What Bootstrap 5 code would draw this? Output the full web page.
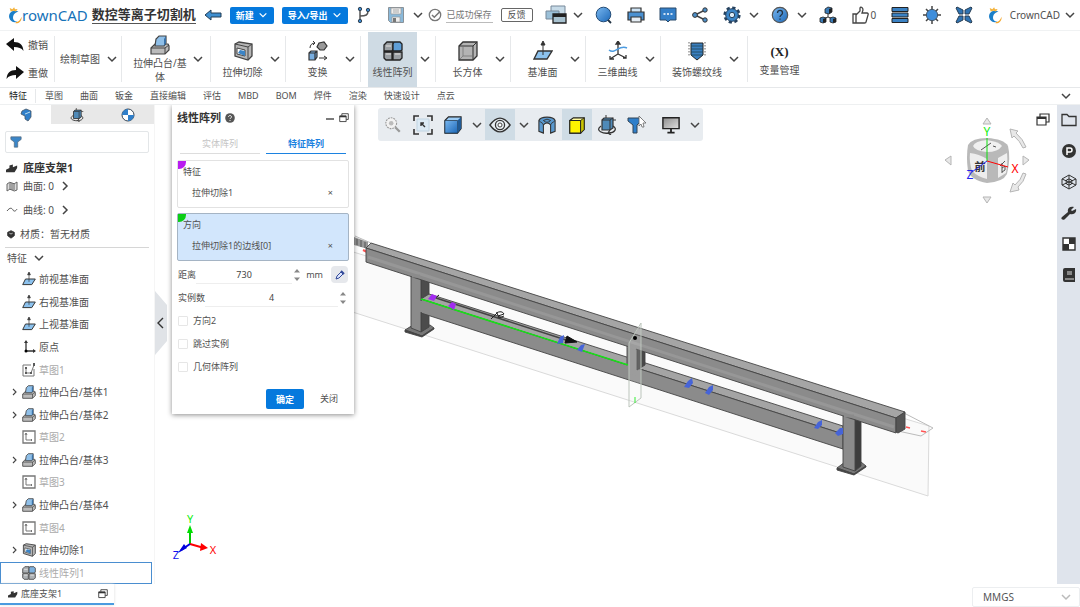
<!DOCTYPE html>
<html lang="zh-CN">
<head>
<meta charset="utf-8">
<meta name="viewport" content="width=device-width, initial-scale=1">
<title>CrownCAD</title>
<link rel="stylesheet" href="https://cdn.jsdelivr.net/npm/bootstrap@5.3.0/dist/css/bootstrap.min.css">
<style>
:root{--ink:#505050;--line:#e6e8ea;--brand:#0579dd;--hl:#cfdbe4}
body{font-family:"Noto Sans","Noto Sans CJK SC",sans-serif;font-size:10px;line-height:14px;color:var(--ink);background:#fff;height:100vh;overflow:hidden}
button{border:0;background:none;padding:0;color:inherit;font:inherit}
a{color:inherit;text-decoration:none}
svg{display:block;flex:none}
main{min-height:0}
.i10{width:10px;height:10px}.i12{width:12px;height:12px}.i14{width:14px;height:14px}.i18{width:18px;height:18px}.i20{width:20px;height:20px}
.chev{width:12px;height:12px;fill:none;stroke:#444;stroke-width:1.5}
.center{display:flex;align-items:center;justify-content:center}
.topbar{height:31px;border-bottom:1px solid #f0f2f3}
.logo-word{font-size:15px;line-height:20px;color:#1672b8}
.doc-title{font-size:13px;line-height:17px;font-weight:700;color:#333;border-bottom:1px solid #555}
.btn-brand{background:var(--brand);color:#fff;font-size:9px;line-height:13px;font-weight:700;border-radius:2px;padding:2px 6px}
.btn-brand:hover{background:#0468bf;color:#fff}
.btn-brand .chev{width:10px;height:10px;stroke:#fff}
.tool{width:32px;height:28px}
.like{width:40px;gap:1px}
.saved{font-size:9px;border-bottom:1px solid #bbb;padding:0 1px;color:#777}
.feedback{font-size:9px;line-height:12px;border:1px solid #666;border-radius:2px;width:32px;height:14px}
.ribbon{height:57px;border-bottom:1px solid var(--line)}
.rgroup{position:relative;height:100%;display:flex;align-items:center;width:75px;padding-left:7px}
.rgroup::after{content:"";position:absolute;right:0;top:5px;bottom:5px;border-right:1px solid var(--line)}
.rbtn{width:49px;height:55px;display:flex;flex-direction:column;align-items:center;justify-content:center;gap:4px;padding-top:2px;white-space:nowrap}
.rbtn.on{background:var(--hl)}
.rgroup>.chev-btn{width:16px}
.g-history{width:55px;padding-left:6px;flex-direction:column;align-items:flex-start;justify-content:space-around}
.g-sketch{width:67px;padding-left:5px}.g-sketch .rbtn{width:40px;padding:0}
.g-extrude{width:89px;padding-left:10px}.g-extrude .rbtn{width:56px;white-space:normal;gap:1px;padding:0}.g-extrude>.chev-btn{width:20px}
.g-thread{width:87px}.g-thread .rbtn{width:58px}
.g-var .rbtn{padding:2px 0 0;gap:2px}
.g-var::after{display:none}
.g-var b{font:700 13px/18px "Liberation Serif",serif;color:#222}
.tabs{height:17px;font-size:9px;border-bottom:1px solid #eef0f1}
.tabs a{padding:0 8px 0 9px;line-height:14px}
.tabs a.active{border-right:1px solid var(--line);color:#222}
.side{width:155px;background:#fff;border-right:1px solid #f5f5f5}
.side-tabs button{height:19px;background:#e8e8e8;flex:1}
.side-tabs button.on{background:#fff}
.filter{margin:7px 5px 0;height:22px;border:1px solid #e3e6e8;border-radius:2px;padding:0 4px;display:flex;align-items:center}
.filter input{border:0;outline:0;min-width:0;width:100%;font-size:10px;padding:0 4px}
.info{padding:5px 6px 0}
.info>div{display:flex;align-items:center;height:24px;gap:5px}
.info .part{height:19px;font-size:11px;font-weight:700;color:#333}
.info .surf{height:18px;margin-bottom:3px}
.feat{border-top:1px solid #d6d6d6;margin:1px 5px 0;padding:0 2px;height:21px;gap:6px}
.tree{flex:1;min-height:0;margin:0;padding:0 2px 0 0}
.tree li{flex:1;display:flex;align-items:center;gap:3px;padding-left:9px;border:1px solid transparent}
.tree .tw{width:9px;height:10px}
.tree .off{color:#aaa}
.tree .off svg{opacity:.8}
.tree .sel{border:1px solid #4a8ed0}
.canvas-area{position:relative;min-width:0;overflow:hidden;background:#fff}
.model{position:absolute;inset:0;width:100%;height:100%}
.handle{position:absolute;left:0;top:186px}
.panel{position:absolute;left:17px;top:0;width:182px;background:#fff;box-shadow:0 1px 5px rgba(0,0,0,.45);padding:5px 5px 3px;font-size:9px}
.panel h2{font-size:11px;line-height:16px;font-weight:700;color:#333;margin:0}
.ptabs{margin:8px 3px 6px;gap:6px}
.ptabs button{flex:1;height:20px;border-bottom:1px solid #ddd;color:#c4c4c4}
.ptabs button.on{border-bottom-color:#1c82e0;color:#1c82e0;font-weight:700}
.pick{position:relative;height:48px;border:1px solid #e2e2e2;border-radius:2px;padding:4px 5px}
.pick::before{content:"";position:absolute;left:0;top:0;width:8px;height:8px;background:#b81cf0;border-bottom-right-radius:7px}
.pick.on{background:#d2e6fc;border-color:#a5b4c4;margin:5px 0 2px}
.pick.on::before{background:#0bce16}
.pick>div{position:relative}
.pick .val{margin:7px 10px 0 9px;display:flex;justify-content:space-between}
.frow{height:23px;display:flex;align-items:center;padding:0 1px}
.frow input[type=text]{border:0;border-bottom:1px solid #eee;border-radius:0;height:18px;min-width:0;flex:1;font-size:9px;text-align:center;color:#444;background:none;padding:0}
.spin{width:10px;height:16px}
.eyedrop{width:17px;height:17px;background:#e6e8ec;border-radius:4px}
.tick{height:23px;display:flex;align-items:center;gap:5px;padding-left:1px}
.tick input{appearance:none;width:10px;height:10px;border:1px solid #e6e6e6;border-radius:1px;margin:0}
.pbtns{height:24px;margin-top:9px;gap:16px;padding-left:89px}
.pbtns .btn-brand{width:38px;height:20px}
.viewbar{position:absolute;left:223px;top:3px;height:33px;background:#e8ecf0;border-radius:3px}
.viewbar button{width:30px;height:31px}
.viewbar .chev-btn{width:17px}
.viewbar .on{background:#cfdce5}
.triad{position:absolute;left:15px;bottom:19px}
.navcube{position:absolute;right:22px;top:8px}
.popout{position:absolute;right:7px;top:8px}
.rail{width:23px;background:#dfe4ec;padding-top:7px;gap:15px}
.foot{height:23px;background:#fff}
.doc-tab{width:114px;height:21px;font-size:9px;border-bottom:2px solid #4a9be0;padding:0 6px 0 8px;gap:3px;box-shadow:0 0 3px #ddd}
.unit{position:relative;width:108px;height:20px;border:1px solid #eceef0;border-radius:2px}
.unit select{appearance:none;border:0;background:none;width:100%;height:100%;padding:0 10px;font-size:10px;color:#555}
.unit .chev{position:absolute;right:7px;top:3px;stroke:#bbb;pointer-events:none}
</style>
</head>
<body class="d-flex flex-column">

<svg width="0" height="0" class="position-absolute" aria-hidden="true">
<defs>
<linearGradient id="gb" x1="0" y1="0" x2="1" y2="1"><stop offset="0" stop-color="#7ab8f0"/><stop offset="1" stop-color="#1c68b8"/></linearGradient>
<linearGradient id="gg" x1="0" y1="0" x2="1" y2="1"><stop offset="0" stop-color="#8d8d8d"/><stop offset="1" stop-color="#e0e0e0"/></linearGradient>
</defs>
<symbol id="down" viewBox="0 0 12 12"><path d="M2 4l4 4 4-4"/></symbol>
<symbol id="right" viewBox="0 0 12 12"><path d="M4 2l4 4-4 4"/></symbol>
<symbol id="crown" viewBox="0 0 16 20"><path d="M12 6C5 3 0 8 1.500 13.500c1 4 5.500 6 9.500 4-4 0-6-3-5-6.500C6.500 8.500 9 7 12 6z" fill="#1b7fc9"/><path d="M9 18c3 0 5-2 6.500-6 .5 5-3 8-7 7.500z" fill="#f4a72c"/><path d="M3 6L2 2l3 1.500L7 1l1 2.500L11 3 9 6 6 5z" fill="#f4b33c"/></symbol>
<symbol id="back" viewBox="0 0 18 12"><path d="M1 6l6-5v3h10v4H7v3z" fill="#3f8fd0" stroke="#233c55"/></symbol>
<symbol id="branch" viewBox="0 0 18 18"><path d="M5 3v12M5 10c6 0 8-1 8-5" fill="none" stroke="#555" stroke-width="1.500"/><g fill="#3a86ca" stroke="#345"><circle cx="5" cy="3" r="1.700"/><circle cx="5" cy="15" r="1.700"/><circle cx="13" cy="4" r="1.700"/></g></symbol>
<symbol id="save" viewBox="0 0 18 18"><path d="M1.500 1.500h15v15h-13l-2-2z" fill="#8ab9da" stroke="#8a9298"/><path d="M4 2h10v6H4zM5 11h8v5H5z" fill="#eee" stroke="#999" stroke-width=".7"/><path d="M6 4h6M6 6h6" stroke="#999" stroke-width=".8"/><path d="M6 12h3v4H6z" fill="#777"/></symbol>
<symbol id="ok" viewBox="0 0 14 14"><circle cx="7" cy="7" r="5.700" fill="none" stroke="#777" stroke-width="1.300"/><path d="M4 7l2.300 2.300L12 3.500" fill="none" stroke="#777" stroke-width="1.500"/></symbol>
<symbol id="wins" viewBox="0 0 22 20"><path d="M6 1h14v9H6z" fill="#c7dbe8" stroke="#789"/><path d="M1 6h13v8H1z" fill="#9bc0d8" stroke="#789"/><path d="M8 9h13v9H8z" fill="#a8c2d0" stroke="#222" stroke-width="1.300"/><path d="M8 9h13v3H8z" fill="#222"/></symbol>
<symbol id="find" viewBox="0 0 18 18"><circle cx="8.500" cy="8.500" r="7.300" fill="url(#gb)" stroke="#234b75"/><path d="M13 14l3 3" stroke="#234" stroke-width="1.800"/></symbol>
<symbol id="print" viewBox="0 0 18 18"><path d="M4 2h10v5H4z" fill="#cde3f5" stroke="#333" stroke-width="1.200"/><path d="M1 6h16v8H1z" fill="#4a91d2" stroke="#333" stroke-width="1.200"/><path d="M4 11h10v5H4z" fill="#e6eef5" stroke="#333" stroke-width="1.200"/></symbol>
<symbol id="chat" viewBox="0 0 18 18"><path d="M1 2h16v12h-6l-2 2-2-2H1z" fill="#347fc8" stroke="#2b4b6b"/><path d="M4.500 8h2M8 8h2M11.500 8h2" stroke="#fff" stroke-width="1.500"/></symbol>
<symbol id="share" viewBox="0 0 18 18"><path d="M14 4L4 9l10 5" fill="none" stroke="#444" stroke-width="1.500"/><g fill="#4c8fc9" stroke="#333"><circle cx="14" cy="4" r="2.200"/><circle cx="4" cy="9" r="2.400"/><circle cx="14" cy="14" r="2.200"/></g></symbol>
<symbol id="gear" viewBox="0 0 18 18"><circle cx="9" cy="9" r="7.300" fill="none" stroke="#25415e" stroke-width="2.600" stroke-dasharray="3.230 2.500"/><circle cx="9" cy="9" r="6.300" fill="#3c86c8" stroke="#25415e"/><circle cx="9" cy="9" r="2.700" fill="#dcebf7" stroke="#25415e"/></symbol>
<symbol id="help" viewBox="0 0 18 18"><circle cx="9" cy="9" r="7.700" fill="url(#gb)" stroke="#555" stroke-width="1.200"/><path d="M6.500 7c0-3.500 5-3.500 5 0 0 2-2.500 2-2.500 4M9 12.500v1.300" fill="none" stroke="#234" stroke-width="1.300"/></symbol>
<symbol id="org" viewBox="0 0 18 18"><path d="M9 7v4M4 13l5-2 5 2" fill="none" stroke="#333"/><g stroke="#222" stroke-width=".8" fill="#3a7cb8"><path d="M6 3l3-2 4 1v4l-3 2-4-1zM1 12l3-1 3 1v4l-3 1-3-1zM11 12l3-1 3 1v4l-3 1-3-1z"/></g><path d="M10 3l3-1v4l-3 2zM4 13l3-1v4l-3 1zM14 13l3-1v4l-3 1z" fill="#222"/></symbol>
<symbol id="thumb" viewBox="0 0 18 18"><path d="M2 8h3v9H2zM5 9l4-4V2c1-2 3 0 3 2l-1 3h5c1 0 1.500 1 1 2l-2 7c0 1-1 1-1.500 1H5" fill="#fff" stroke="#444" stroke-width="1.300"/></symbol>
<symbol id="bars" viewBox="0 0 18 18"><g fill="#3b82c4" stroke="#222"><path d="M1 1.500h16v4H1zM1 7h16v4H1zM1 12.500h16v4H1z"/></g></symbol>
<symbol id="sun" viewBox="0 0 18 18"><path d="M9 0v18M0 9h18M3 3l12 12M15 3L3 15" stroke="#444" stroke-width="1.500"/><circle cx="9" cy="9" r="5.600" fill="#3f8edb" stroke="#456"/></symbol>
<symbol id="four" viewBox="0 0 18 18"><g fill="#2f74b4" stroke="#263c52"><path d="M1 2l1-1 6 3v4H4zM17 2l-1-1-6 3v4h4zM1 16l1 1 6-3v-4H4zM17 16l-1 1-6-3v-4h4z"/></g></symbol>
<symbol id="undo" viewBox="0 0 18 14"><path d="M0 6l8-6v4c6 0 9 3 9.500 9-2-3-5-4-9.500-4v4z" fill="#111"/></symbol>
<symbol id="redo" viewBox="0 0 18 14"><path d="M18 6l-8-6v4C4 4 1 7 .5 13c2-3 5-4 9.500-4v4z" fill="#111"/></symbol>
<symbol id="boss" viewBox="0 0 20 20"><path d="M1 13l4-4h13l1 2v4l-4 4H1z" fill="#bbb" stroke="#444" stroke-width="1.200"/><path d="M1 13h14l4-3M15 13v6" fill="none" stroke="#444"/><path d="M5 11l1-7 3-3h7v7l-2 3z" fill="#8fbfe8" stroke="#444" stroke-width="1.200"/><path d="M14 4l2-3v7l-2 3z" fill="#3a72a8"/></symbol>
<symbol id="cut" viewBox="0 0 20 20"><path d="M2 3l4-2 13 2v12l-4 4-13-4z" fill="#b5b5b5" stroke="#444" stroke-width="1.300"/><path d="M2 3l13 3v13M15 6l4-3" fill="none" stroke="#444"/><path d="M4 7l8 2v6l-8-2z" fill="#fff" stroke="#444"/><path d="M5 12l2-3 5 1v5z" fill="#3b84c6"/></symbol>
<symbol id="trans" viewBox="0 0 20 20"><path d="M11 2l5-1 3 4-3 4-4 0-3-3z" fill="#999" stroke="#333" stroke-width="1.200"/><path d="M1 12l2-2h6v6l-2 3H1zM1 12h6v7M7 12l2-2" fill="#78aee0" stroke="#333" stroke-width="1.200"/><path d="M2 7c0-3 2-5 5-5M5 0l2 2-2 2M11 17h7M16 15l3 2-3 2" fill="none" stroke="#333"/></symbol>
<symbol id="array" viewBox="0 0 20 20"><g fill="#9a9fa3" stroke="#222" stroke-width="1.300"><path d="M1 4l3-3h6v7l-1 2H1zM1 11h8v8H3l-2-2zM10 11h9v6l-2 2h-7z"/><path d="M10 3l1-2h6l2 2v6l-2 1h-7z" fill="#5f9ed6"/></g><path d="M3 5h5M3 13h5M12 13h5" stroke="#ccc" stroke-width="1.500"/></symbol>
<symbol id="box" viewBox="0 0 20 20"><path d="M1 5l4-4h14v14l-4 4H1z" fill="#b4b4b4" stroke="#333" stroke-width="1.300"/><path d="M1 5h14v14M15 5l4-4" fill="none" stroke="#333"/><path d="M5 6v9l-3 3M5 15h9" fill="none" stroke="#777" stroke-width=".8"/></symbol>
<symbol id="plane" viewBox="0 0 20 20"><path d="M5 10h14l-5 8H1z" fill="#8cc2ee" stroke="#333" stroke-width="1.400"/><path d="M10 14V3M8 4l2-4 2 4z" stroke="#333" fill="#333"/></symbol>
<symbol id="curve3" viewBox="0 0 20 20"><path d="M10 1v12l-8 5M10 13l8 4M8 3l2-3 2 3zM2 15v3h4M18 14v3h-3" fill="none" stroke="#333" stroke-width="1.300"/><path d="M1 9c6 5 10-6 18-2" fill="none" stroke="#4c9be0" stroke-width="1.500"/></symbol>
<symbol id="thread" viewBox="0 0 20 20"><path d="M4 2h12v12l-6 5-6-5z" fill="#3b80c0" stroke="#222"/><path d="M4 5h12M4 8h12M4 11h12M4 14h12" stroke="#245" stroke-width=".8"/><path d="M2 1v14M18 1v14" stroke="#666" stroke-dasharray="1.500 1.500"/></symbol>
<symbol id="solid" viewBox="0 0 14 14"><path d="M3 3l4-2 5 2v6l-3 4-3-2V8L2 6z" fill="#2f7fca" stroke="#456" stroke-width=".8"/><path d="M6 6l5-2" stroke="#bde"/></symbol>
<symbol id="turn" viewBox="0 0 20 20"><path d="M5 5l2-2h9v10l-3 2H5z" fill="#4f8ab8" stroke="#333" stroke-width="1.200"/><path d="M5 5h8v10M13 5l3-2M9 0v3M16 5h3" fill="none" stroke="#333"/><path d="M4 11c-7 5 3 8 8 7 5 0 9-4 4-7M13 15l-2 3 3 2" fill="none" stroke="#333" stroke-width="1.300"/></symbol>
<symbol id="ball" viewBox="0 0 14 14"><circle cx="7" cy="7" r="6" fill="#fff" stroke="#345"/><path d="M7 7V1a6 6 0 0 0-6 6zM7 7v6a6 6 0 0 0 6-6z" fill="#2f7fca"/></symbol>
<symbol id="funnel" viewBox="0 0 14 14"><path d="M1 1h12v3L9 7v6H5V7L1 4z" fill="#3b86c8" stroke="#567" stroke-width=".8"/></symbol>
<symbol id="part" viewBox="0 0 14 14"><path d="M0 9l4-2V4l4-1v3l5-2v3l-3 5H0z" fill="#333"/></symbol>
<symbol id="surf" viewBox="0 0 12 12"><path d="M1 4q3-3 5-1t5-1v8q-3 2-5 0t-5 1zM4 3v7M6 3v7M8 3v7" fill="#ddd" stroke="#666"/></symbol>
<symbol id="wave" viewBox="0 0 12 12"><path d="M1 7c3-4 5-3 6-1s3 1 4-1" fill="none" stroke="#555"/></symbol>
<symbol id="mat" viewBox="0 0 12 12"><path d="M6 2l4 2v4l-4 3-4-3V4z" fill="#333" stroke="#333" stroke-linejoin="round"/><path d="M4 5l2 1 2-1" stroke="#ccc" fill="none"/></symbol>
<symbol id="origin" viewBox="0 0 14 14"><path d="M4 2v9h9" fill="none" stroke="#333" stroke-width="1.300"/><path d="M2 3l2-3 2 3zM11 9l3 2-3 2z" fill="#333"/><circle cx="4" cy="11" r="1.500"/></symbol>
<symbol id="sketch" viewBox="0 0 14 14"><path d="M1 1h12v12H1z" fill="#fff" stroke="#555" stroke-width="1.300"/><path d="M4 3v7h6M3 5l1-2 1 2M9 9l1 1-1 1" fill="none" stroke="#555"/></symbol>
<symbol id="sketchp" viewBox="0 0 14 14"><path d="M9 2H1v11h11V6M4 5v5h5l3-8" fill="none" stroke="#555"/><path d="M3 4h2v2H3zM3 9h2v2H3zM8 9h2v2H8zM11 0h2v3h-2z" fill="#333"/></symbol>
<symbol id="pop" viewBox="0 0 14 14"><path d="M4 4V1h9v8h-3" fill="none" stroke="#333" stroke-width="1.200"/><path d="M1 4h9v8H1z" fill="#fff" stroke="#333" stroke-width="1.200"/><path d="M1 4h9v2H1z" fill="#333"/></symbol>
<symbol id="spin" viewBox="0 0 10 16"><path d="M2 5.500L5 2l3 3.500zM2 10.500L5 14l3-3.500z" fill="#888"/></symbol>
<symbol id="zoomw" viewBox="0 0 20 20"><circle cx="8" cy="8" r="6" fill="#f2f2f2" stroke="#999" stroke-width="1.200" stroke-dasharray="2 1"/><circle cx="8" cy="8" r="2.500" fill="#bbb"/><path d="M12.500 12.500l5 5" stroke="#999" stroke-width="2.500"/></symbol>
<symbol id="fit" viewBox="0 0 20 20"><path d="M1 6V1h5M14 1h5v5M19 14v5h-5M6 19H1v-5" fill="none" stroke="#333" stroke-width="1.600"/><path d="M4 4h12v12H4z" fill="#dceaf4" stroke="#c0d4e2"/><path d="M8 8l4 4M8 11V8h3" fill="none" stroke="#333" stroke-width="1.400"/></symbol>
<symbol id="cubeb" viewBox="0 0 20 20"><path d="M1 5l4-4h14v13l-4 5H1z" fill="#9cccf5" stroke="#222" stroke-width="1.200"/><path d="M1 5h14v14H1z" fill="url(#gb)" stroke="#234" stroke-width=".8"/><path d="M15 5l4-4v13l-4 5z" fill="#205a94"/></symbol>
<symbol id="eye" viewBox="0 0 24 18"><path d="M1 9Q12-6 23 9 12 24 1 9z" fill="#e8eef2" stroke="#333" stroke-width="1.500"/><circle cx="12" cy="9" r="5" fill="none" stroke="#333" stroke-width="1.400"/><circle cx="12" cy="9" r="2.200" fill="#fff" stroke="#333"/></symbol>
<symbol id="section" viewBox="0 0 20 20"><path d="M1 5c2-5 16-5 18 0v12l-5 2v-9c-2-3-6-3-8 0v9l-5-2z" fill="#5a99cf" stroke="#333" stroke-width="1.200"/><path d="M1 5c3 3 5 3 5 5M19 5c-3 3-5 3-5 5M6 5q4-3 8 0-4 4-8 0" fill="none" stroke="#333"/></symbol>
<symbol id="cubey" viewBox="0 0 20 20"><path d="M2 5l4-3h12v13l-4 4H2z" fill="#fffba0" stroke="#222" stroke-width="1.300"/><path d="M2 5h12v14H2z" fill="#fff200" stroke="#222" stroke-width="1.200"/><path d="M14 5l4-3v13l-4 4z" fill="#c9c400" stroke="#222"/></symbol>
<symbol id="fcur" viewBox="0 0 20 20"><path d="M1 3h13v3l-4 4v8H6v-8L1 6z" fill="#2f7fca" stroke="#345"/><path d="M12 1l7 7h-3l1 4-2 0-1-3-2 2z" fill="#fff" stroke="#666" stroke-width=".8"/></symbol>
<symbol id="mon" viewBox="0 0 20 20"><path d="M1 2h18v12H1z" fill="url(#gg)" stroke="#222" stroke-width="1.600"/><path d="M10 14v4M6 18.500h8" stroke="#222" stroke-width="2"/></symbol>
</svg>

<header class="topbar d-flex align-items-center justify-content-between text-nowrap">
  <div class="d-flex align-items-center">
    <a href="#" class="d-flex align-items-center ms-2" aria-label="CrownCAD"><svg width="14" height="20"><use href="#crown"/></svg><span class="logo-word">rownCAD</span></a>
    <span class="doc-title ms-1">数控等离子切割机</span>
    <button class="center mx-2" aria-label="返回"><svg width="18" height="12"><use href="#back"/></svg></button>
    <button class="btn-brand d-flex align-items-center gap-1">新建<svg class="chev"><use href="#down"/></svg></button>
    <button class="btn-brand d-flex align-items-center ms-2">导入/导出<svg class="chev ms-1"><use href="#down"/></svg></button>
    <button class="tool center" aria-label="分支"><svg class="i18"><use href="#branch"/></svg></button>
    <button class="tool center" aria-label="保存"><svg class="i18"><use href="#save"/></svg></button>
    <button aria-label="保存选项"><svg class="chev"><use href="#down"/></svg></button>
    <svg class="i14 ms-1 me-1"><use href="#ok"/></svg><span class="saved">已成功保存</span>
    <button class="feedback ms-2">反馈</button>
  </div>
  <div class="d-flex align-items-center">
    <button class="tool center" aria-label="窗口"><svg width="22" height="20"><use href="#wins"/></svg></button>
    <button class="me-1" aria-label="窗口选项"><svg class="chev"><use href="#down"/></svg></button>
    <button class="tool center" aria-label="搜索"><svg class="i18"><use href="#find"/></svg></button>
    <button class="tool center" aria-label="打印"><svg class="i18"><use href="#print"/></svg></button>
    <button class="tool center" aria-label="消息"><svg class="i18"><use href="#chat"/></svg></button>
    <button class="tool center" aria-label="分享"><svg class="i18"><use href="#share"/></svg></button>
    <button class="tool center" aria-label="设置"><svg class="i18"><use href="#gear"/></svg></button>
    <button class="me-1" aria-label="设置选项"><svg class="chev"><use href="#down"/></svg></button>
    <button class="tool center" aria-label="帮助"><svg class="i18"><use href="#help"/></svg></button>
    <button class="me-1" aria-label="帮助选项"><svg class="chev"><use href="#down"/></svg></button>
    <button class="tool center" aria-label="结构"><svg class="i18"><use href="#org"/></svg></button>
    <button class="like center" aria-label="点赞 0"><svg class="i18"><use href="#thumb"/></svg><span>0</span></button>
    <button class="tool center" aria-label="列表"><svg class="i18"><use href="#bars"/></svg></button>
    <button class="tool center" aria-label="主题"><svg class="i18"><use href="#sun"/></svg></button>
    <button class="tool center" aria-label="全屏"><svg class="i18"><use href="#four"/></svg></button>
    <button class="d-flex align-items-center ms-2 me-1"><svg width="14" height="18" class="me-2"><use href="#crown"/></svg>CrownCAD<svg class="chev ms-1"><use href="#down"/></svg></button>
  </div>
</header>

<div class="ribbon d-flex">
  <div class="rgroup g-history"><button class="d-flex align-items-center gap-1"><svg width="18" height="14"><use href="#undo"/></svg>撤销</button><button class="d-flex align-items-center gap-1"><svg width="18" height="14"><use href="#redo"/></svg>重做</button></div>
  <div class="rgroup g-sketch"><button class="rbtn">绘制草图</button><button class="chev-btn center ms-1" aria-label="草图选项"><svg class="chev"><use href="#down"/></svg></button></div>
  <div class="rgroup g-extrude"><button class="rbtn"><svg class="i20"><use href="#boss"/></svg>拉伸凸台/基体</button><button class="chev-btn center" aria-label="拉伸选项"><svg class="chev"><use href="#down"/></svg></button></div>
  <div class="rgroup"><button class="rbtn"><svg class="i20"><use href="#cut"/></svg>拉伸切除</button><button class="chev-btn center" aria-label="切除选项"><svg class="chev"><use href="#down"/></svg></button></div>
  <div class="rgroup"><button class="rbtn"><svg class="i20"><use href="#trans"/></svg>变换</button><button class="chev-btn center" aria-label="变换选项"><svg class="chev"><use href="#down"/></svg></button></div>
  <div class="rgroup"><button class="rbtn on"><svg class="i20"><use href="#array"/></svg>线性阵列</button><button class="chev-btn center" aria-label="阵列选项"><svg class="chev"><use href="#down"/></svg></button></div>
  <div class="rgroup"><button class="rbtn"><svg class="i20"><use href="#box"/></svg>长方体</button><button class="chev-btn center" aria-label="实体选项"><svg class="chev"><use href="#down"/></svg></button></div>
  <div class="rgroup"><button class="rbtn"><svg class="i20"><use href="#plane"/></svg>基准面</button><button class="chev-btn center" aria-label="基准选项"><svg class="chev"><use href="#down"/></svg></button></div>
  <div class="rgroup"><button class="rbtn"><svg class="i20"><use href="#curve3"/></svg>三维曲线</button><button class="chev-btn center" aria-label="曲线选项"><svg class="chev"><use href="#down"/></svg></button></div>
  <div class="rgroup g-thread"><button class="rbtn"><svg class="i20"><use href="#thread"/></svg>装饰螺纹线</button><button class="chev-btn center" aria-label="螺纹选项"><svg class="chev"><use href="#down"/></svg></button></div>
  <div class="rgroup g-var"><button class="rbtn"><b>(X)</b>变量管理</button></div>
</div>

<nav class="tabs d-flex align-items-center">
  <a href="#" class="active">特征</a><a href="#">草图</a><a href="#">曲面</a><a href="#">钣金</a><a href="#">直接编辑</a><a href="#">评估</a><a href="#">MBD</a><a href="#">BOM</a><a href="#">焊件</a><a href="#">渲染</a><a href="#">快速设计</a><a href="#">点云</a>
  <button class="ms-auto me-2" aria-label="收起"><svg class="chev"><use href="#down"/></svg></button>
</nav>

<main class="d-flex flex-grow-1">
  <aside class="side d-flex flex-column flex-shrink-0">
    <div class="side-tabs d-flex"><button class="on center" aria-label="特征树"><svg class="i14"><use href="#solid"/></svg></button><button class="center" aria-label="配置"><svg class="i14"><use href="#turn"/></svg></button><button class="center" aria-label="外观"><svg class="i14"><use href="#ball"/></svg></button></div>
    <div class="filter"><label for="flt"><svg class="i12"><use href="#funnel"/></svg></label><input id="flt" type="text" aria-label="过滤"></div>
    <div class="info">
      <div class="part"><svg class="i12"><use href="#part"/></svg>底座支架1</div>
      <div class="surf"><svg class="i12"><use href="#surf"/></svg>曲面: 0<svg class="chev"><use href="#right"/></svg></div>
      <div><svg class="i12"><use href="#wave"/></svg>曲线: 0<svg class="chev"><use href="#right"/></svg></div>
      <div class="gap-1"><svg class="i10"><use href="#mat"/></svg>材质：暂无材质</div>
    </div>
    <div class="feat d-flex align-items-center">特征<svg class="chev"><use href="#down"/></svg></div>
    <ul class="tree list-unstyled d-flex flex-column">
      <li><span class="tw"></span><svg class="i14"><use href="#plane"/></svg>前视基准面</li>
      <li><span class="tw"></span><svg class="i14"><use href="#plane"/></svg>右视基准面</li>
      <li><span class="tw"></span><svg class="i14"><use href="#plane"/></svg>上视基准面</li>
      <li><span class="tw"></span><svg class="i14"><use href="#origin"/></svg>原点</li>
      <li class="off"><span class="tw"></span><svg class="i14"><use href="#sketchp"/></svg>草图1</li>
      <li><svg class="chev tw"><use href="#right"/></svg><svg class="i14"><use href="#boss"/></svg>拉伸凸台/基体1</li>
      <li><svg class="chev tw"><use href="#right"/></svg><svg class="i14"><use href="#boss"/></svg>拉伸凸台/基体2</li>
      <li class="off"><span class="tw"></span><svg class="i14"><use href="#sketch"/></svg>草图2</li>
      <li><svg class="chev tw"><use href="#right"/></svg><svg class="i14"><use href="#boss"/></svg>拉伸凸台/基体3</li>
      <li class="off"><span class="tw"></span><svg class="i14"><use href="#sketch"/></svg>草图3</li>
      <li><svg class="chev tw"><use href="#right"/></svg><svg class="i14"><use href="#boss"/></svg>拉伸凸台/基体4</li>
      <li class="off"><span class="tw"></span><svg class="i14"><use href="#sketch"/></svg>草图4</li>
      <li><svg class="chev tw"><use href="#right"/></svg><svg class="i14"><use href="#cut"/></svg>拉伸切除1</li>
      <li class="off sel"><span class="tw"></span><svg class="i14"><use href="#array"/></svg>线性阵列1</li>
    </ul>
  </aside>

  <section class="canvas-area flex-grow-1">
    <svg class="model" viewBox="155 105 902 479" aria-label="三维模型">
      <path d="M340 248L929 426 928 496 340 308z" fill="#fafafa" stroke="#dadada"/>
      <path d="M355 236l16 7M904 413l29 15-12 8-23-5" fill="none" stroke="#bbb"/>
      <path d="M906 427l4 1M921 431l5 1" stroke="#f55" stroke-width="1.500"/>
      <path d="M354 237l14 5v7l-14-4z" fill="#999"/><path d="M357 239v6M361 240v7M365 242v6M371 244l9 3" stroke="#555"/><path d="M363 250l4 2" stroke="#f55" stroke-width="2"/>
      <g stroke="#444" stroke-width=".9" stroke-linejoin="round">
        <path d="M405 330l8-5h17l4 3-12 8z" fill="#777"/><path d="M405 330v2l17 5 12-8v-1l-12 8z" fill="#444"/>
        <path d="M837 468l8-6h16l5 4-12 8z" fill="#777"/><path d="M837 468v2l17 5 12-8v-1l-12 8z" fill="#444"/>
        <path d="M421 280h8v47l-8 5z" fill="#4c4c4c"/>
        <path d="M429 294L843 426v8L421 299z" fill="#a4a4a4"/>
        <path d="M421 299L843 434v15L421 313z" fill="#8b8b8b"/>
        <path d="M411 274h10v58l-10-4z" fill="#8b8b8b"/>
        <path d="M637 348l8 4v13l-8 5z" fill="#484848"/>
        <path d="M627 344h10v32l-10-3z" fill="#8b8b8b" stroke="none"/><path d="M627 344v21M637 348v22" fill="none"/>
        <path d="M855 418h6v48l-6 5z" fill="#3d3d3d"/>
        <path d="M843 412h12v59l-12-4z" fill="#8b8b8b"/>
        <path d="M366 248l5-5 534 169-9 6z" fill="#a5a5a5"/>
        <path d="M366 248l530 170v15L366 262z" fill="#8b8b8b"/>
        <path d="M896 418l9-6v17l-7 4-2-1z" fill="#555"/>
      </g>
      <path d="M368 257l526 170" stroke="#979797" stroke-width="3"/>
      <path d="M421.500 301v11M412 276h8M844 416h10M628 346l8 3" stroke="#8b8b8b" stroke-width="3"/>
      <path d="M421 299L628 365" stroke="#18e018" stroke-width="1.600"/>
      <path d="M436 298l130 42" stroke="#444" stroke-width="1.500"/>
      <path d="M565 343l2-7 10 6zM434 299l5-4" fill="#111" stroke="#111"/>
      <path d="M491 319l6-6 2 5 5-2M496 313q6-3 8 1l-6 2" fill="none" stroke="#222"/>
      <path d="M428 299l4-5 5 2-3 5zM448 306l4-4 4 2-2 6z" fill="#a22cf0"/>
      <g fill="#4664d8"><path d="M557 344l3-7 4-2-1 8zM577 350l4-5 4-1-3 8zM684 387l4-6 4-3 1 5-4 5zM705 393l4-6 4-2v5l-4 5zM814 428l4-6 4-2v5l-4 4zM835 433l5-5 3 0v6l-5 2z"/></g>
      <path d="M629 343l12-20v75l-12 9z" fill="rgba(255,255,255,.15)" stroke="#bcc5bc"/><circle cx="635" cy="338" r="2"/><path d="M635 397v6" stroke="#3e3"/>
    </svg>

    <button class="handle" aria-label="收起侧栏"><svg width="13" height="64" viewBox="0 0 13 64"><path d="M0 0l12 14v36L0 64z" fill="#e0e3e7"/><path d="M8 27l-5 5 5 5" fill="none" stroke="#333" stroke-width="1.400"/></svg></button>

    <div class="viewbar d-flex align-items-center">
      <button class="center" aria-label="局部放大"><svg class="i18"><use href="#zoomw"/></svg></button>
      <button class="center" aria-label="适合窗口"><svg class="i20"><use href="#fit"/></svg></button>
      <button class="center" aria-label="显示样式"><svg class="i18"><use href="#cubeb"/></svg></button>
      <button class="chev-btn center" aria-label="样式选项"><svg class="chev"><use href="#down"/></svg></button>
      <button class="center on" aria-label="可见性"><svg width="22" height="18"><use href="#eye"/></svg></button>
      <button class="chev-btn center" aria-label="可见性选项"><svg class="chev"><use href="#down"/></svg></button>
      <button class="center" aria-label="剖视"><svg class="i18"><use href="#section"/></svg></button>
      <button class="center on" aria-label="着色"><svg class="i18"><use href="#cubey"/></svg></button>
      <button class="center" aria-label="旋转"><svg class="i20"><use href="#turn"/></svg></button>
      <button class="center" aria-label="选择过滤"><svg class="i20"><use href="#fcur"/></svg></button>
      <button class="center ms-1" aria-label="显示器"><svg class="i18"><use href="#mon"/></svg></button>
      <button class="chev-btn center" aria-label="显示器选项"><svg class="chev"><use href="#down"/></svg></button>
    </div>

    <form class="panel" onsubmit="return false">
      <div class="d-flex align-items-center gap-1"><h2>线性阵列</h2><svg class="i10" viewBox="0 0 10 10"><circle cx="5" cy="5" r="4.800" fill="#555"/><path d="M3.500 4c0-2 3-2 3 0 0 1-1.500 1-1.500 2M5 7v1" fill="none" stroke="#fff" stroke-width=".9"/></svg>
        <button type="button" class="ms-auto" aria-label="最小化"><svg class="i10" viewBox="0 0 10 10"><path d="M1 6h8" stroke="#333" stroke-width="1.300"/></svg></button><button type="button" aria-label="弹出"><svg class="i10"><use href="#pop"/></svg></button></div>
      <div class="ptabs d-flex"><button type="button">实体阵列</button><button type="button" class="on">特征阵列</button></div>
      <div class="pick"><div>特征</div><div class="val"><span>拉伸切除1</span><button type="button" aria-label="移除特征">×</button></div></div>
      <div class="pick on"><div>方向</div><div class="val"><span>拉伸切除1的边线[0]</span><button type="button" aria-label="移除方向">×</button></div></div>
      <div class="frow"><label for="dist">距离</label><input id="dist" type="text" value="730"><svg class="spin me-1"><use href="#spin"/></svg><span class="me-2">mm</span><button type="button" class="eyedrop center" aria-label="测量"><svg class="i10" viewBox="0 0 10 10"><path d="M2 6l4-4 2 2-4 4-3 1z" fill="#dde6ff" stroke="#334a9a"/><path d="M6 1l3 3" stroke="#334a9a" stroke-width="2"/></svg></button></div>
      <div class="frow"><label for="cnt">实例数</label><input id="cnt" type="text" value="4"><svg class="spin"><use href="#spin"/></svg></div>
      <div class="tick"><input type="checkbox" id="c1"><label for="c1">方向2</label></div>
      <div class="tick"><input type="checkbox" id="c2"><label for="c2">跳过实例</label></div>
      <div class="tick"><input type="checkbox" id="c3"><label for="c3">几何体阵列</label></div>
      <div class="pbtns d-flex align-items-center"><button class="btn-brand center">确定</button><button type="button">关闭</button></div>
    </form>

    <svg class="triad" width="50" height="55" viewBox="170 510 50 55"><g stroke-width="2"><path d="M190 544v-12" stroke="#0c0"/><path d="M190 544l14 4" stroke="red"/><path d="M190 544l-9 6" stroke="#00d"/></g><path d="M187 533l3-8 3 8z" fill="#0d0"/><path d="M201 543l7 5-8 3z" fill="red"/><path d="M184 544l3 4-9 5z" fill="#00d"/><g font-size="11" text-anchor="middle"><text x="190" y="523" fill="#1e1">Y</text><text x="213" y="554" fill="red">X</text><text x="176" y="559" fill="#11e">Z</text></g></svg>

    <svg class="navcube" width="95" height="95" viewBox="940 113 95 95">
      <g fill="#e8e8e8" stroke="#b5b5b5"><path d="M983 124l4-6 4 6zM983 197l4 6 4-6zM951 156l-6 4 6 5zM1023 156l6 4-6 5z"/><path d="M1010 129l8 2-2 2q7 6 10 14l-3 1q-3-7-9-12l-2 2zM1026 174q-2 8-8 13l1 3-9 2 3-9 2 2q6-5 8-12z"/></g>
      <path d="M968 145q4-7 19-7 17 1 21 8 3 12-1 28-4 8-20 9-16-3-19-12-2-14 0-26z" fill="#b9b9b9"/>
      <path d="M973 146q2-5 14-6 13 2 15 6-4 6-15 6-12-1-14-6z" fill="#f0f0f0"/><path d="M970 153q9 1 17 6v20q-9-2-15-8-3-9-2-18z" fill="#ededed"/><path d="M998 158l9-5q1 9-1 20l-8 5z" fill="#eee"/>
      <path d="M981 150l10-7M993 146l3 1M1000 166l5-5M1002 163v10M1002 168l3-2v4l-3 2" fill="none" stroke="#555"/>
      <text x="980" y="171" font-size="11" font-weight="700" text-anchor="middle" fill="#333">前</text>
      <path d="M987 161v-23" stroke="#1d1"/><path d="M987 161l21 6" stroke="red"/><path d="M987 161l-15 11" stroke="#22e"/>
      <g font-size="12" text-anchor="middle"><text x="987" y="136" fill="#1e1">Y</text><text x="1015" y="173" fill="red">X</text><text x="970" y="179" fill="#22e">Z</text></g>
    </svg>
    <button class="popout" aria-label="新窗口"><svg class="i14"><use href="#pop"/></svg></button>
  </section>

  <aside class="rail d-flex flex-column align-items-center flex-shrink-0">
    <button aria-label="文件夹"><svg width="16" height="16" viewBox="0 0 16 16"><path d="M1 2.500h5l2 2h7v9H1z" fill="none" stroke="#333" stroke-width="1.300"/></svg></button>
    <button aria-label="属性"><svg width="16" height="16" viewBox="0 0 16 16"><circle cx="8" cy="8" r="7" fill="#333"/><path d="M6 12V5h3a2 2 0 0 1 0 4H6" fill="none" stroke="#fff" stroke-width="1.500"/></svg></button>
    <button aria-label="标准件"><svg width="16" height="16" viewBox="0 0 16 16"><path d="M8 1l7 4v6l-7 4-7-4V5zM1 5l7 3 7-3M8 1v14M1 11l7-3 7 3" fill="none" stroke="#333"/><circle cx="8" cy="8" r="3" fill="none" stroke="#333"/></svg></button>
    <button aria-label="工具"><svg width="16" height="16" viewBox="0 0 16 16"><path d="M1 12l6-5c-1-4 2-6 6-5l-3 3 1 1 4-2c1 4-3 6-6 5l-5 5c-2 2-5 0-3-2z" fill="#333"/></svg></button>
    <button aria-label="外观库"><svg width="16" height="16" viewBox="0 0 16 16"><path d="M2 2h12v12H2z" fill="#fff" stroke="#333" stroke-width="1.400"/><path d="M8 2h6v6H8zM2 8h6v6H2z" fill="#333"/></svg></button>
    <button aria-label="手册"><svg width="16" height="16" viewBox="0 0 16 16"><path d="M4 1h10v14H4q-2 0-2-2V3q0-2 2-2z" fill="#333"/><path d="M6 5h5M6 7h5M4 12h9" stroke="#ddd"/></svg></button>
  </aside>
</main>

<footer class="foot d-flex justify-content-between align-items-start">
  <div class="doc-tab d-flex align-items-center"><svg class="i10"><use href="#part"/></svg><span>底座支架1</span><button class="ms-auto" aria-label="弹出文档"><svg class="i10"><use href="#pop"/></svg></button></div>
  <div class="unit align-self-end"><select aria-label="单位"><option>MMGS</option></select><svg class="chev"><use href="#down"/></svg></div>
</footer>
<script src="https://cdn.jsdelivr.net/npm/bootstrap@5.3.0/dist/js/bootstrap.bundle.min.js"></script>
</body>
</html>
